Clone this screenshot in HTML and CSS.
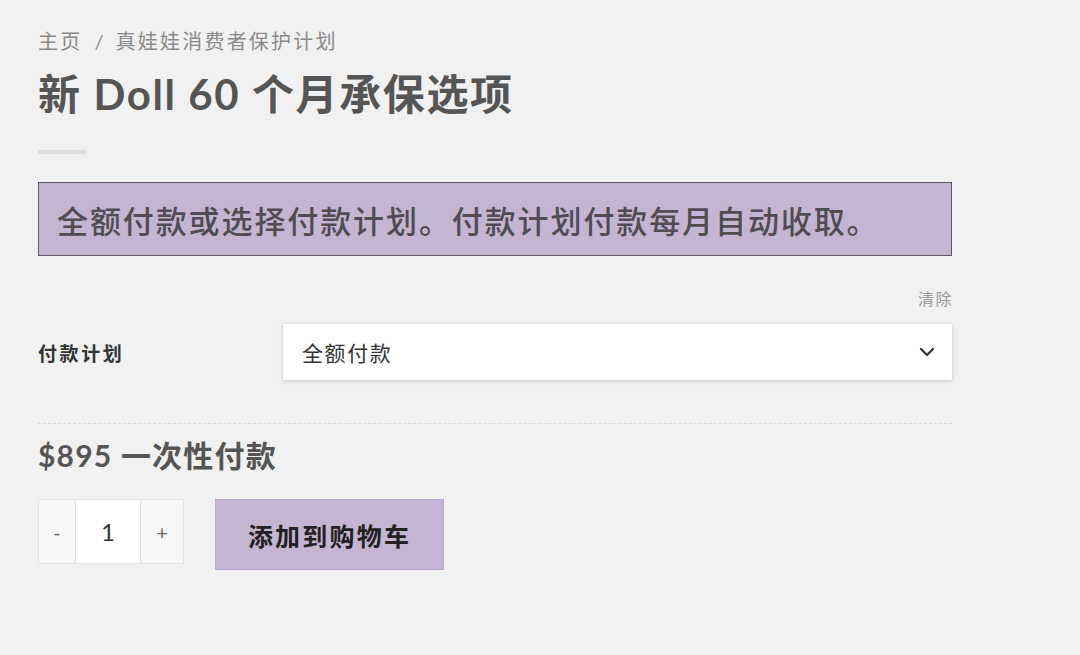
FILE: index.html
```html
<!DOCTYPE html>
<html lang="zh">
<head>
<meta charset="utf-8">
<link rel="stylesheet" href="styles.css">
</head>
<body>
<main class="page">
  <nav class="crumbs"><span>主页</span><span class="sep">/</span><span>真娃娃消费者保护计划</span></nav>
  <h1 class="title">新 Doll 60 个月承保选项</h1>
  <div class="rule"></div>
  <div class="notice">全额付款或选择付款计划。付款计划付款每月自动收取。</div>
  <div class="clear-row"><span class="clear">清除</span></div>
  <div class="field">
    <label class="label">付款计划</label>
    <div class="select">
      <span>全额付款</span>
      <svg class="chev" width="16" height="10" viewBox="0 0 16 10"><path d="M2 2 L8 8 L14 2" fill="none" stroke="#333" stroke-width="2.2" stroke-linecap="round" stroke-linejoin="round"/></svg>
    </div>
  </div>
  <div class="dash"></div>
  <div class="price">$895 一次性付款</div>
  <div class="buy">
    <div class="qty">
      <span class="qbtn">-</span>
      <span class="qval">1</span>
      <span class="qbtn">+</span>
    </div>
    <button class="add">添加到购物车</button>
  </div>
</main>
</body>
</html>
```

FILE: styles.css
```css
html, body { margin: 0; padding: 0; }
body {
  background: #f1f1f1;
  font-family: Lato, "Noto Sans CJK SC", sans-serif;
  color: #555;
  width: 1080px;
  height: 655px;
  overflow: hidden;
}
.page {
  width: 914px;
  margin-left: 38px;
  padding-top: 27px;
}
.crumbs {
  font-size: 20px;
  color: #8a8a8a;
  line-height: 28px;
  display: flex;
  letter-spacing: 2.2px;
}
.crumbs .sep { margin: 0 10px 0 12px; }
.title {
  margin: 13px 0 0;
  font-size: 42px;
  font-weight: 700;
  line-height: 52px;
  color: #555;
  letter-spacing: 1.6px;
}
.rule {
  width: 49px;
  height: 4px;
  background: #dcdcdc;
  margin-top: 30px;
}
.notice {
  margin-top: 28px;
  height: 72px;
  border: 1px solid #5f5a63;
  background: #c4b5d3;
  display: flex;
  align-items: center;
  padding-left: 18px;
  font-size: 31px;
  font-weight: 500;
  color: #4f4c52;
  letter-spacing: 1.9px;
}
.clear-row {
  display: flex;
  justify-content: flex-end;
  margin-top: 32px;
  line-height: 22px;
}
.clear { font-size: 16px; color: #9a9a9a; letter-spacing: 1.5px; margin-right: -1px; }
.field {
  display: flex;
  align-items: center;
  margin-top: 14px;
}
.label {
  width: 245px;
  font-size: 19px;
  font-weight: 700;
  color: #333;
  letter-spacing: 2.6px;
}
.select {
  flex: 1;
  height: 56px;
  background: #fff;
  box-shadow: 0 1px 4px rgba(0,0,0,0.18);
  display: flex;
  align-items: center;
  justify-content: space-between;
  padding: 0 17px 0 19px;
  font-size: 21px;
  color: #333;
  letter-spacing: 1.6px;
}
.dash {
  margin-top: 43px;
  border-top: 1px dashed #dadada;
}
.price {
  margin-top: 13px;
  font-size: 30px;
  font-weight: 700;
  color: #555;
  line-height: 36px;
  letter-spacing: 1.2px;
}
.buy {
  display: flex;
  align-items: flex-start;
  margin-top: 26px;
  gap: 31px;
}
.qty {
  display: flex;
  height: 65px;
  border: 1px solid #e3e3e3;
  box-sizing: border-box;
}
.qbtn {
  width: 36px;
  display: flex;
  align-items: center;
  justify-content: center;
  background: #f7f7f7;
  font-size: 20px;
  color: #666;
}
.qbtn:last-child { width: 42px; border-left: 1px solid #e3e3e3; }
.qval {
  width: 64px;
  display: flex;
  align-items: center;
  justify-content: center;
  background: #fff;
  font-size: 24px;
  color: #333;
  border-left: 1px solid #e3e3e3;
}
.add {
  width: 229px;
  height: 71px;
  background: #c4b5d3;
  border: 1px solid #b9aacb;
  font-family: Lato, "Noto Sans CJK SC", sans-serif;
  font-size: 25px;
  font-weight: 700;
  color: #222;
  padding: 0;
  letter-spacing: 2.2px;
}
```
